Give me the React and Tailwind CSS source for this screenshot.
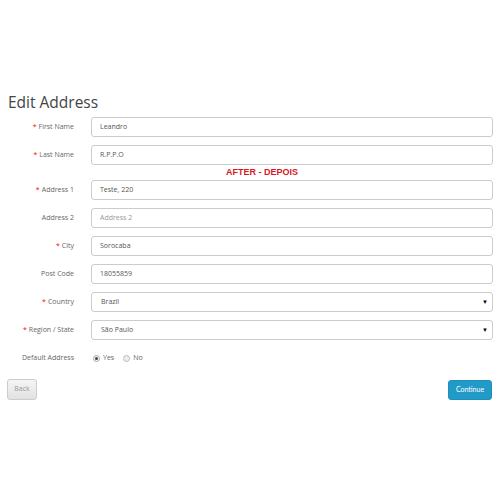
const rows = [
  { label: 'First Name', required: true, value: 'Leandro' },
  { label: 'Last Name', required: true, value: 'R.P.P.O' },
  { label: 'Address 1', required: true, value: 'Teste, 220' },
  { label: 'Address 2', required: false, placeholder: 'Address 2' },
  { label: 'City', required: true, value: 'Sorocaba' },
  { label: 'Post Code', required: false, value: '18055859' },
  { label: 'Country', required: true, value: 'Brazil', select: true },
  { label: 'Region / State', required: true, value: 'São Paulo', select: true },
];

function Label({ text, required }) {
  return (
    <div className="w-[67px] shrink-0 text-right text-[7px] text-[#666]">
      {required && <span className="text-[#f00] mr-[2px]">*</span>}
      {text}
    </div>
  );
}

function Field({ row }) {
  return (
    <div className="flex items-center h-[20px]">
      <Label text={row.label} required={row.required} />
      <div className="ml-[17px] flex-1 h-full flex items-center justify-between border border-[#ccc] rounded-[3px] bg-white pl-[8px] pr-[4px] text-[7px]">
        {row.value ? (
          <span className={row.select ? 'text-[#555] pl-[1px]' : 'text-[#555]'}>{row.value}</span>
        ) : (
          <span className="text-[#999]">{row.placeholder}</span>
        )}
        {row.select && <span className="text-[6px] text-black leading-none">▼</span>}
      </div>
    </div>
  );
}

export default function App() {
  return (
    <div className="w-[500px] h-[500px] bg-white px-[7px] pt-[92px]" style={{ fontFamily: '"Open Sans", sans-serif' }}>
      <h1 className="text-[15.5px] leading-[20px] text-[#444] ml-[1px] mb-[5px]">Edit Address</h1>

      <div className="flex flex-col">
        <div className="mb-[8px]"><Field row={rows[0]} /></div>
        <Field row={rows[1]} />
        <div className="h-[15px] flex items-center pl-[219px]">
          <span className="text-[9px] font-bold text-[#d9161e]" style={{ fontFamily: '"Liberation Sans", Arial, sans-serif' }}>
            AFTER - DEPOIS
          </span>
        </div>
        {rows.slice(2).map((row) => (
          <div key={row.label} className="mb-[8px]"><Field row={row} /></div>
        ))}

        <div className="flex items-center h-[20px] text-[7px] text-[#666]">
          <div className="w-[67px] shrink-0 text-right">Default Address</div>
          <div className="ml-[19px] flex items-center gap-[3px]">
            <span className="w-[7px] h-[7px] rounded-full border border-[#aaa] bg-[#f4f4f4] flex items-center justify-center">
              <span className="w-[3px] h-[3px] rounded-full bg-[#444]" />
            </span>
            <span>Yes</span>
            <span className="ml-[6px] w-[7px] h-[7px] rounded-full border border-[#bbb] bg-[#eee]" />
            <span>No</span>
          </div>
        </div>
      </div>

      <div className="flex justify-between items-center mt-[11px]">
        <button className="w-[30px] h-[21px] rounded-[3px] border border-[#ccc] bg-gradient-to-b from-[#f5f5f5] to-[#e2e2e2] text-[7px] text-[#999]">
          Back
        </button>
        <button className="mr-[1px] w-[44px] h-[20px] rounded-[3px] border border-[#1f90bb] bg-[#229ac8] text-[7px] text-white" style={{ fontFamily: 'Lato, sans-serif' }}>
          Continue
        </button>
      </div>
    </div>
  );
}
